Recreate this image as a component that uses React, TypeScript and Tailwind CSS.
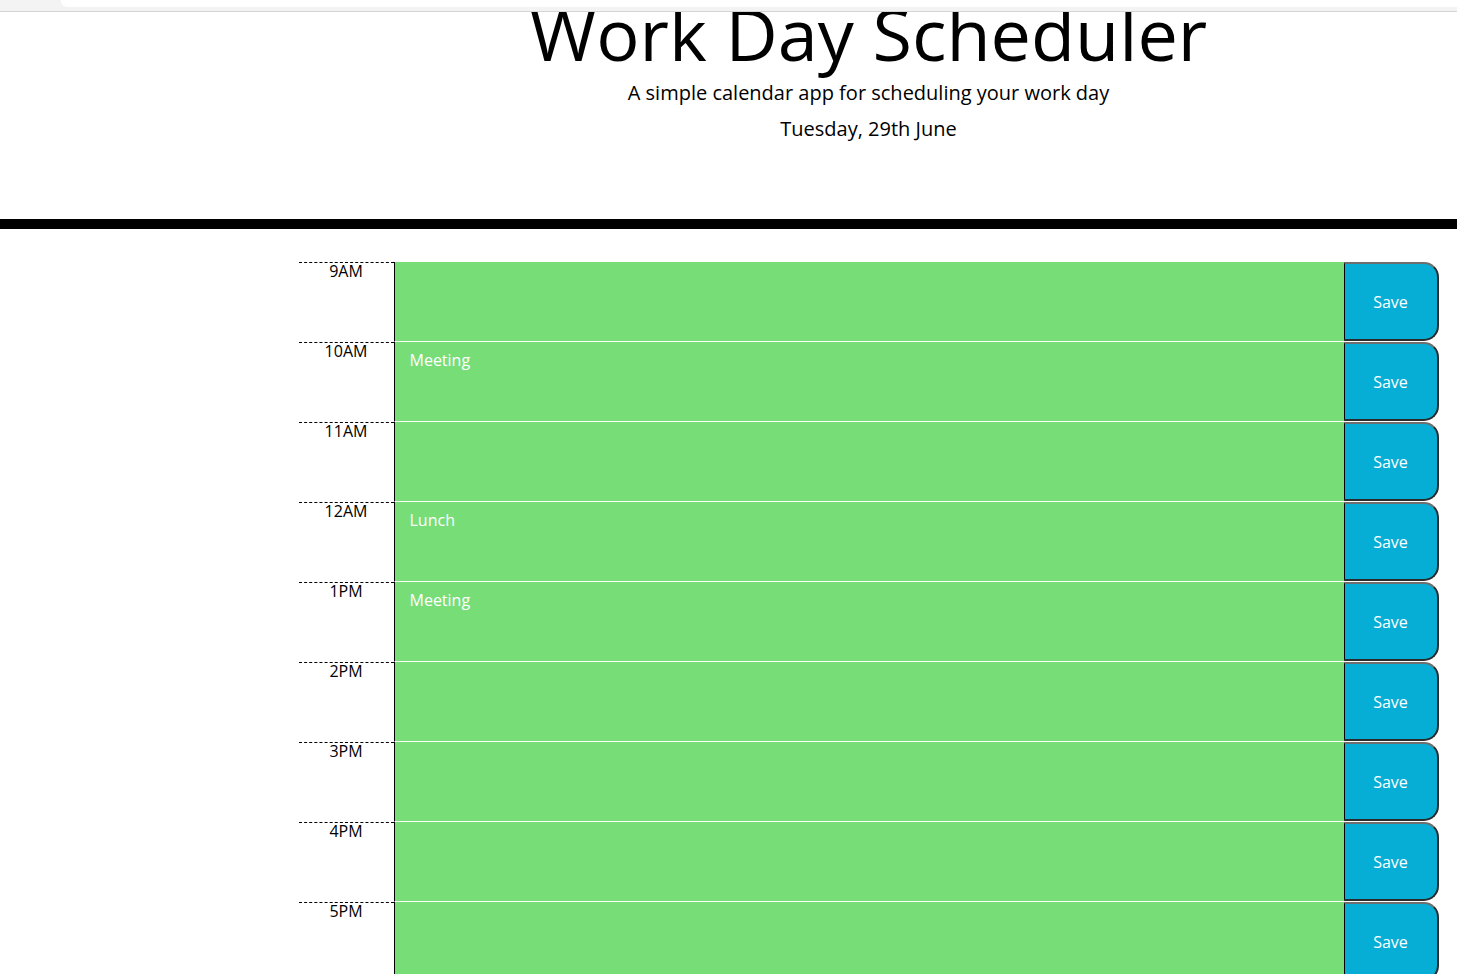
import { useState } from "react";

const HOURS = ["9AM", "10AM", "11AM", "12AM", "1PM", "2PM", "3PM", "4PM", "5PM"];

const INITIAL: Record<string, string> = {
  "10AM": "Meeting",
  "12AM": "Lunch",
  "1PM": "Meeting",
};

function HourRow({ hour }: { hour: string }) {
  const [text, setText] = useState(INITIAL[hour] ?? "");

  return (
    <div className="flex h-20">
      <div className="w-[95px] shrink-0 border-t border-dashed border-black text-center text-base leading-4 text-black">
        {hour}
      </div>
      <textarea
        value={text}
        onChange={(e) => setText(e.target.value)}
        className="w-[950px] h-20 resize-none border-l border-l-black border-b border-b-white bg-[#77dd77] text-white text-base leading-6 pl-[15px] pt-[6px] outline-none"
      />
      <button className="w-[95px] h-[79px] shrink-0 bg-[#06aed5] text-white text-base rounded-r-[15px] border-2 border-t-[#6e6e6e] border-r-[#2b2b2b] border-b-[#2b2b2b] border-l border-l-black">
        Save
      </button>
    </div>
  );
}

export default function App() {
  return (
    <div className="relative h-screen overflow-hidden bg-white font-['Open_Sans',sans-serif]">
      {/* browser chrome strip */}
      <div className="absolute inset-x-0 top-0 z-10 h-[12px] bg-[#f3f3f3] border-b border-[#d4d4d4]">
        <div className="ml-[61px] h-[7px] bg-white rounded-bl-md"></div>
      </div>

      <div className="w-[1737px]">
        <header className="text-center border-b-[10px] border-black mt-[-10px] h-[239px]">
          <h1 className="text-[72px] font-normal leading-[1.2] text-black">Work Day Scheduler</h1>
          <p className="text-xl font-normal leading-[30px] mt-[2px] text-black">
            A simple calendar app for scheduling your work day
          </p>
          <p className="text-xl font-normal leading-[30px] mt-[6px] text-black">Tuesday, 29th June</p>
        </header>

        <div className="w-[1140px] mx-auto mt-[33px]">
          {HOURS.map((h) => (
            <HourRow key={h} hour={h} />
          ))}
        </div>
      </div>
    </div>
  );
}
